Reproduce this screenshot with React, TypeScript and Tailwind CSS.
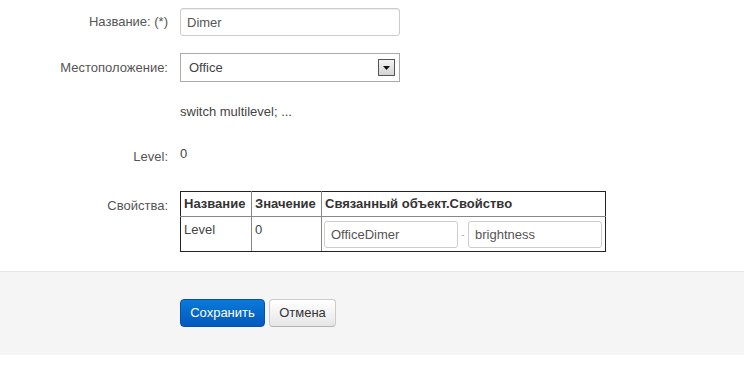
const font = { fontFamily: '"Liberation Sans", Arial, sans-serif' };

function Row({ label, children, className }: { label: string; children: React.ReactNode; className?: string }) {
  return (
    <div className={"flex " + (className ?? "")}>
      <label className="w-[168px] shrink-0 text-right text-[13px] text-[#555]">{label}</label>
      <div className="ml-[12px]">{children}</div>
    </div>
  );
}

export default function App() {
  return (
    <div style={font} className="h-[372px] w-[744px] overflow-hidden bg-white text-[13px] text-[#333]">
      <div className="pt-[8px]">
        <Row label="Название: (*)" className="items-center">
          <input
            defaultValue="Dimer"
            className="h-[28px] w-[220px] rounded-[3px] border border-[#ccc] px-[6px] text-[13px] text-[#555] shadow-[inset_0_1px_1px_rgba(0,0,0,0.075)] outline-none"
          />
        </Row>

        <Row label="Местоположение:" className="mt-[17px] items-center">
          <div className="flex h-[29px] w-[220px] items-center justify-between border border-[#aaa] bg-white pl-[8px] pr-[4px] text-[#444]">
            <span>Office</span>
            <span className="flex h-[17px] w-[17px] items-center justify-center border border-[#555] bg-gradient-to-b from-[#f4f4f4] to-[#d4d4d4]">
              <svg width="7" height="4" viewBox="0 0 7 4">
                <path d="M0 0h7L3.5 4z" fill="#111" />
              </svg>
            </span>
          </div>
        </Row>

        <div className="ml-[180px] mt-[20px] text-[#444]">switch multilevel; ...</div>

        <Row label="Level:" className="mt-[25px]">
          <span className="relative top-[-3px] text-[#444]">0</span>
        </Row>

        <Row label="Свойства:" className="mt-[30px]">
          <table className="relative top-[-5px] w-[426px] border-collapse border border-[#222] text-[13px]">
            <thead>
              <tr className="h-[25px]">
                <th className="w-[71px] border border-[#888] border-t-[#222] border-l-[#222] px-[3px] text-left font-bold text-[#333]">Название</th>
                <th className="w-[70px] border border-[#888] border-t-[#222] px-[3px] text-left font-bold text-[#333]">Значение</th>
                <th className="border border-[#888] border-t-[#222] border-r-[#222] px-[3px] text-left font-bold text-[#333]">Связанный объект.Свойство</th>
              </tr>
            </thead>
            <tbody>
              <tr className="h-[35px]">
                <td className="border border-[#888] border-b-[#222] border-l-[#222] px-[3px] pt-[3px] align-top text-[#444]">Level</td>
                <td className="border border-[#888] border-b-[#222] px-[3px] pt-[3px] align-top text-[#444]">0</td>
                <td className="border border-[#888] border-b-[#222] border-r-[#222] px-[2px] pb-[1px] pt-[4px] align-top">
                  <div className="flex items-center">
                    <input
                      defaultValue="OfficeDimer"
                      className="h-[27px] w-[134px] rounded-[3px] border border-[#ccc] px-[6px] text-[13px] text-[#555] outline-none"
                    />
                    <span className="w-[10px] text-center text-[10px] text-[#aaa]">-</span>
                    <input
                      defaultValue="brightness"
                      className="h-[27px] w-[134px] rounded-[3px] border border-[#ccc] px-[6px] text-[13px] text-[#555] outline-none"
                    />
                  </div>
                </td>
              </tr>
            </tbody>
          </table>
        </Row>

        <div className="mt-[14px] h-[84px] border-t border-[#e5e5e5] bg-[#f5f5f5] pl-[180px] pt-[27px]">
          <div className="flex gap-[4px]">
            <button className="h-[28px] w-[85px] rounded-[4px] border border-[#0550a8] bg-gradient-to-b from-[#0a7ad8] to-[#0558bd] text-[13px] text-white">
              Сохранить
            </button>
            <button className="h-[28px] w-[67px] rounded-[4px] border border-[#ccc] border-b-[#b3b3b3] bg-gradient-to-b from-white to-[#e6e6e6] text-[13px] text-[#333]">
              Отмена
            </button>
          </div>
        </div>
      </div>
    </div>
  );
}
